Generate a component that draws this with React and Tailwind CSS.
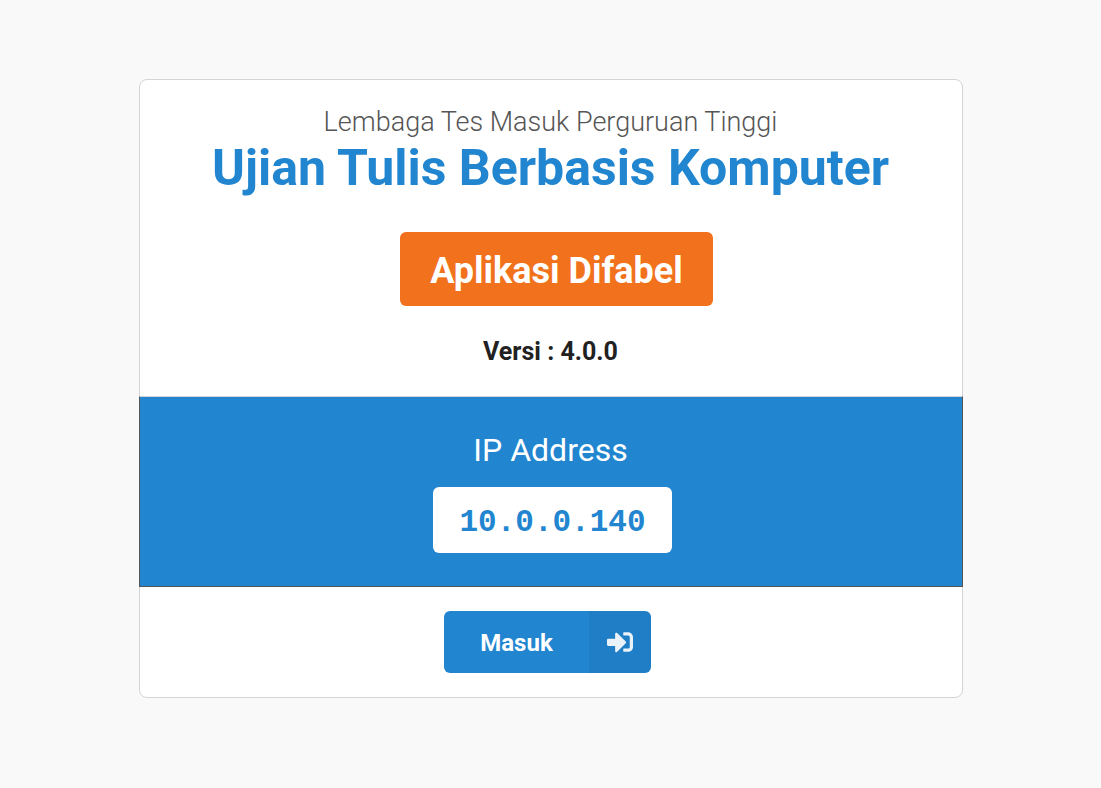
import { FaSignInAlt } from "react-icons/fa";

const app = {
    institution: "Lembaga Tes Masuk Perguruan Tinggi",
    title: "Ujian Tulis Berbasis Komputer",
    edition: "Aplikasi Difabel",
    version: "4.0.0",
    ip: "10.0.0.140",
};

const Header = () => {
    return (
        <header className="flex flex-col items-center px-4 pt-6 pb-[26px] text-center">
            <p className="text-[27px] leading-9 font-light text-[#555555]">{app.institution}</p>
            <h1 className="text-[50px] leading-14 font-bold text-[#2185d0]">{app.title}</h1>
            <div className="mt-9 ml-3 flex h-[74px] items-center rounded-md bg-[#f2711c] px-[30px] pt-1 text-[36px] font-bold text-white">
                {app.edition}
            </div>
            <p className="mt-7 text-[25px] leading-9 font-bold text-[#212121]">Versi : {app.version}</p>
        </header>
    );
}

const Address = () => {
    return (
        <section className="-mx-px flex flex-col items-center border border-[#555555] border-t-[#d4d4d5] bg-[#2185d0] pt-[31px] pb-[33px] text-center">
            <h2 className="text-[32px] leading-11 text-white">IP Address</h2>
            <div className="mt-[15px] ml-1 rounded-md bg-white px-[26px] pt-[15px] pb-[9px] font-['Liberation_Mono',monospace] text-[31px] leading-[42px] font-bold text-[#2185d0]">
                {app.ip}
            </div>
        </section>
    );
}

const App = () => {
    return (
        <div className="min-h-screen bg-[#f9f9f9] px-4 py-[79px] font-[Roboto,sans-serif]">
            <main className="mx-auto max-w-[824px] rounded-lg border border-[#d4d4d5] bg-white">
                <Header />
                <Address />
                <div className="flex justify-center py-6">
                    <button type="button" className="mr-1.5 flex h-[62px] cursor-pointer items-center overflow-hidden rounded-md bg-[#2185d0] text-white">
                        <span className="px-9 pt-0.5 text-[24px] font-bold">Masuk</span>
                        <span className="flex h-full w-[62px] items-center justify-center bg-black/5">
                            <FaSignInAlt className="size-[26px] opacity-90" />
                        </span>
                    </button>
                </div>
            </main>
        </div>
    );
}

export default App;
